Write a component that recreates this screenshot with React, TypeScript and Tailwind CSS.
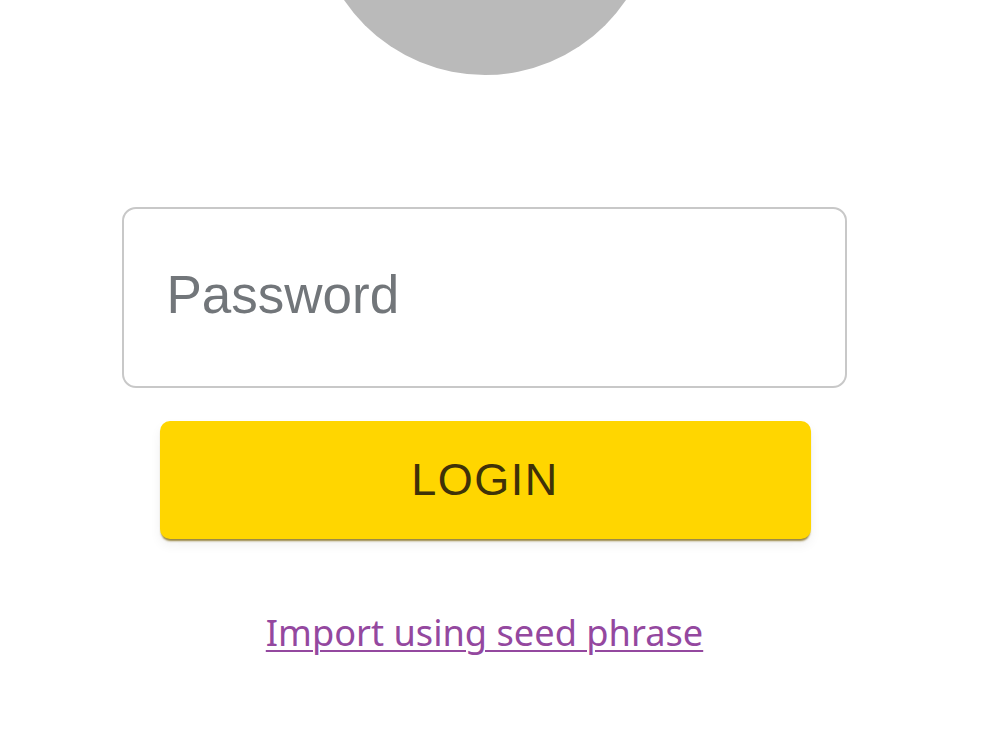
function App() {
  return (
    <div className="w-[1000px] h-[750px] overflow-hidden bg-white">
      <div className="w-[969px] flex flex-col items-center font-['Liberation_Sans',sans-serif]">
        <div className="w-[340px] h-[340px] -mt-[265px] rounded-full bg-[#bababa] shrink-0" />
        <div className="w-[725px] h-[181px] mt-[132px] -ml-[1px] px-[43px] flex items-center border-2 border-[#c8c8c8] rounded-[14px] bg-white">
          <span className="text-[53px] leading-none text-[#72767a] -mt-[7px]">Password</span>
        </div>
        <button className="w-[651px] h-[118px] mt-[33px] ml-[1px] rounded-[10px] bg-[#ffd600] text-[45px] tracking-[1.5px] text-[#3f3208] shadow-[0_3px_2px_-1px_rgba(120,95,0,0.75),0_6px_12px_rgba(0,0,0,0.06)]">
          LOGIN
        </button>
        <a href="#" className="mt-[68px] text-[36.2px] leading-[50px] text-[#94489f] underline underline-offset-[4px] decoration-[1.5px] font-['Noto_Sans',sans-serif]">
          Import using seed phrase
        </a>
      </div>
    </div>
  );
}

export default App;
